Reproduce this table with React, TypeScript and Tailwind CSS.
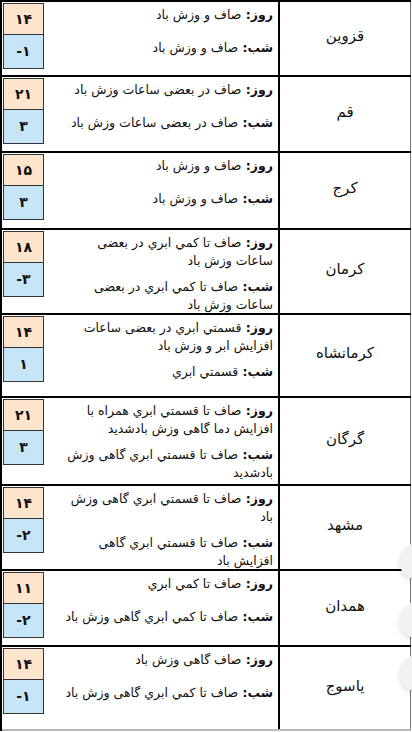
const rows = [
  { city: "قزوين", h: "h-[75px]", hi: "۱۴", lo: "-۱", day: ["صاف و وزش باد"], night: ["صاف و وزش باد"] },
  { city: "قم", h: "h-[76px]", hi: "۲۱", lo: "۳", day: ["صاف در بعضی ساعات وزش باد"], night: ["صاف در بعضی ساعات وزش باد"] },
  { city: "کرج", h: "h-[77px]", hi: "۱۵", lo: "۳", day: ["صاف و وزش باد"], night: ["صاف و وزش باد"] },
  { city: "کرمان", h: "h-[85px]", hi: "۱۸", lo: "-۳", day: ["صاف تا کمي ابري در بعضی", "ساعات وزش باد"], night: ["صاف تا کمي ابري در بعضی", "ساعات وزش باد"] },
  { city: "کرمانشاه", h: "h-[83px]", hi: "۱۴", lo: "۱", day: ["قسمتي ابري در بعضی ساعات", "افزايش ابر و وزش باد"], night: ["قسمتي ابري"] },
  { city: "گرگان", h: "h-[88px]", hi: "۲۱", lo: "۳", day: ["صاف تا قسمتي ابري همراه با", "افزايش دما گاهی وزش بادشديد"], night: ["صاف تا قسمتي ابري گاهی وزش", "بادشديد"] },
  { city: "مشهد", h: "h-[85px]", hi: "۱۴", lo: "-۲", day: ["صاف تا قسمتي ابري گاهی وزش", "باد"], night: ["صاف تا قسمتي ابري گاهی", "افزايش باد"] },
  { city: "همدان", h: "h-[76px]", hi: "۱۱", lo: "-۲", day: ["صاف تا کمي ابري"], night: ["صاف تا کمي ابري گاهی وزش باد"] },
  { city: "یاسوج", h: "h-[84px]", hi: "۱۴", lo: "-۱", day: ["صاف گاهی وزش باد"], night: ["صاف تا کمي ابري گاهی وزش باد"] },
];

const Para = ({ label, lines }: { label: string; lines: string[] }) => (
  <div className="min-h-[25px] mb-[8px]">
    {lines.map((line, i) => (
      <div key={i} className="whitespace-nowrap">
        {i === 0 && <span className="font-bold">{label}: </span>}
        {line}
      </div>
    ))}
  </div>
);

const App = () => {
  return (
    <div className="relative w-[412px] h-[732px] bg-white overflow-hidden text-[#111] font-['DejaVu_Sans',Tahoma,sans-serif]">
      <div className="w-[411px] border-t-2 border-l-2 border-black">
        {rows.map((r, idx) => (
          <div
            key={idx}
            className={`flex border-b-2 ${idx === rows.length - 1 ? "border-[#bbbbbb]" : "border-black"} ${r.h}`}
          >
            <div className="w-[42px] shrink-0 pt-[1px] pl-[1px]">
              <div className="h-[32px] w-[41px] border border-[#333] bg-[#fce4cd] flex items-center justify-center text-[14px] font-bold" dir="ltr">
                {r.hi}
              </div>
              <div className="h-[34px] w-[41px] border border-t-0 border-[#333] bg-[#c6e6f8] flex items-center justify-center text-[14px] font-bold" dir="ltr">
                {r.lo}
              </div>
            </div>
            <div dir="rtl" className="flex-1 pt-[4px] pr-[5px] text-right text-[12.5px] leading-[18px]">
              <Para label="روز" lines={r.day} />
              <Para label="شب" lines={r.night} />
            </div>
            <div className="w-[133px] shrink-0 border-l-2 border-black border-r border-r-[#777] flex items-center justify-center pb-[4px] text-[15px]">
              {r.city}
            </div>
          </div>
        ))}
      </div>
      <div className="absolute left-[399px] top-[543px] w-[36px] h-[36px] rounded-full bg-[#f2f2f2] shadow-md" />
      <div className="absolute left-[399px] top-[602px] w-[36px] h-[36px] rounded-full bg-[#f2f2f2] shadow-md" />
      <div className="absolute left-[399px] top-[655px] w-[36px] h-[36px] rounded-full bg-[#f2f2f2] shadow-md" />
    </div>
  );
};

export default App;
